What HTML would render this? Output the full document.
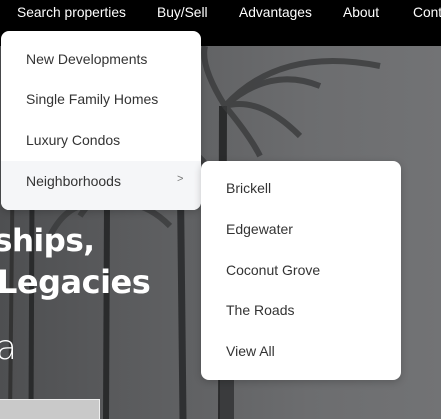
<!DOCTYPE html>
<html><head><meta charset="utf-8">
<style>
*{margin:0;padding:0;box-sizing:border-box}
html,body{width:441px;height:419px;overflow:hidden}
body{position:relative;font-family:"Segoe UI","Liberation Sans",sans-serif;background:#6a6b6d}
.bg{position:absolute;left:0;top:46px;width:441px;height:373px;background:linear-gradient(90deg,#4e4f51 0%,#5f6062 40%,#6c6d6f 70%,#727375 100%)}
nav{position:absolute;left:0;top:0;width:441px;height:46px;background:#000;color:#fff;font-size:13.8px}
nav span{position:absolute;top:5px}
.dd{position:absolute;background:#fff;border-radius:8px;color:#333;font-size:14px;box-shadow:0 2px 8px rgba(0,0,0,.2)}
.dd div{position:absolute;left:25px}
.hero{position:absolute;color:#fff;font-family:"DejaVu Sans","Liberation Sans",sans-serif}
</style></head><body>
<div class="bg"></div>
<svg style="position:absolute;left:0;top:46px" width="441" height="373">
<g stroke="#2a2b2c" fill="none">
<line x1="32" y1="150" x2="31" y2="373" stroke-width="5"/>
<line x1="107" y1="160" x2="106" y2="373" stroke-width="6"/>
<line x1="180" y1="100" x2="183" y2="373" stroke-width="7" stroke="#2f3032"/>
<line x1="223" y1="60" x2="222" y2="373" stroke-width="8" stroke="#2a2b2c"/>
<line x1="227" y1="300" x2="227" y2="373" stroke-width="14" stroke="#3a3b3d"/>
<line x1="14" y1="0" x2="10" y2="373" stroke-width="4" stroke="#333"/>
<g stroke-width="6" stroke="#3a3b3c" opacity=".8">
<path d="M225 60 Q270 20 320 40"/><path d="M225 60 Q260 50 300 90"/><path d="M225 60 Q280 0 380 20"/>
<path d="M225 60 Q200 20 205 0"/><path d="M225 60 Q250 90 260 110"/>
<path d="M107 160 Q70 150 50 190"/><path d="M107 160 Q140 150 170 180"/><path d="M107 160 Q100 140 80 170"/>
<path d="M180 100 Q210 110 220 150"/><path d="M180 100 Q160 120 150 160"/>
</g></g></svg>
<nav>
<span style="left:17px">Search properties</span>
<span style="left:157px">Buy/Sell</span>
<span style="left:239px">Advantages</span>
<span style="left:343px">About</span>
<span style="left:413px">Contact</span>
</nav>
<div class="hero" style="left:-6px;top:223px;font-size:31px;font-weight:bold;letter-spacing:-0.5px">ships,</div>
<div class="hero" style="left:-3px;top:263px;font-size:32px;font-weight:bold;letter-spacing:-0.5px">Legacies</div>
<div class="hero" style="left:-4px;top:328px;font-size:34px;font-weight:200">a</div>
<div style="position:absolute;left:-2px;top:399px;width:102px;height:20px;background:#c9c9c9;border:1px solid #eee;border-bottom:none"></div>
<div class="dd" style="left:1px;top:31px;width:200px;height:179px">
<div style="top:20px">New Developments</div>
<div style="top:60px">Single Family Homes</div>
<div style="top:101px">Luxury Condos</div>
<section style="position:absolute;left:0;top:130px;width:200px;height:49px;background:#f5f6f8;border-radius:0 0 8px 8px"></section>
<div style="top:142px">Neighborhoods</div>
<div style="top:142px;left:176px;font-size:11px;color:#777">&gt;</div>
</div>
<div class="dd" style="left:201px;top:161px;width:200px;height:219px">
<div style="top:19px">Brickell</div>
<div style="top:60px">Edgewater</div>
<div style="top:101px">Coconut Grove</div>
<div style="top:141px">The Roads</div>
<div style="top:182px">View All</div>
</div>
</body></html>
